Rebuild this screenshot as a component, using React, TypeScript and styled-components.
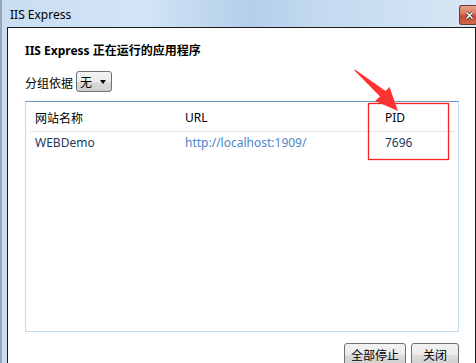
import React from "react";
import styled, { createGlobalStyle } from "styled-components";

const Global = createGlobalStyle`
  html, body { margin: 0; padding: 0; overflow: hidden; background: #fff; }
  body { font-family: "Segoe UI", "Noto Sans", "Noto Sans CJK SC", sans-serif; }
`;

const Window = styled.div`
  position: relative;
  width: 476px;
  height: 363px;
  box-sizing: border-box;
  overflow: hidden;
  border-left: 2px solid #9aa6b2;
  background: linear-gradient(90deg, #c9ddf2 0%, #d3e4f5 30%, #b3cfea 52%, #c4daf0 68%, #d8e7f6 100%);
  display: flex;
  flex-direction: column;
`;

const TitleBar = styled.div`
  height: 27px;
  flex: none;
  display: flex;
  align-items: center;
  justify-content: space-between;
  padding: 1px 0 0 8px;
  box-sizing: border-box;
`;

const Title = styled.span`
  font-size: 12px;
  color: #000;
  font-family: "Segoe UI", "Noto Sans", sans-serif;
`;

const CloseBtn = styled.div`
  width: 18px;
  height: 18px;
  margin-top: 2px;
  margin-right: -2px;
  border: 1px solid #6b3a30;
  border-right: none;
  border-radius: 3px 0 0 3px;
  background: linear-gradient(180deg, #e9a48f 0%, #d9735a 45%, #c24a2c 55%, #d2674c 100%);
  display: flex;
  align-items: center;
  justify-content: center;
`;

const Client = styled.div`
  flex: 1;
  margin-left: 5px;
  width: 469px;
  box-sizing: border-box;
  border: 1px solid #1a1a1a;
  border-bottom: none;
  background: #fff;
  padding: 0 16px 0 17px;
  display: flex;
  flex-direction: column;
`;

const Heading = styled.div`
  margin-top: 15px;
  font-size: 12px;
  line-height: 16px;
  font-weight: bold;
  color: #000;
`;

const GroupRow = styled.div`
  margin-top: 12px;
  height: 21px;
  display: flex;
  align-items: center;
  font-size: 12px;
  color: #000;
`;

const GroupLabel = styled.span`
  margin-top: 3px;
  margin-right: 3px;
`;

const Combo = styled.div`
  width: 36px;
  height: 21px;
  box-sizing: border-box;
  border: 1px solid #707070;
  border-radius: 3px;
  background: linear-gradient(180deg, #f4f4f4 0%, #ebebeb 50%, #dddddd 51%, #cfcfcf 100%);
  display: flex;
  align-items: center;
  justify-content: space-between;
  padding: 0 5px 0 3px;
  font-size: 12px;
`;

const Arrow = styled.span`
  width: 0;
  height: 0;
  border-left: 3.5px solid transparent;
  border-right: 3.5px solid transparent;
  border-top: 4px solid #000;
`;

const ListBox = styled.div`
  margin-top: 9px;
  height: 231px;
  box-sizing: border-box;
  border: 1px solid #c2dbed;
  border-top-color: #6d9ac4;
  padding: 0 3px;
  background: #fff;
`;

const HeaderRow = styled.div`
  display: grid;
  grid-template-columns: 150px 200px 1fr;
  height: 30px;
  align-items: center;
  border-bottom: 1px solid #e5e5e5;
  font-size: 12px;
  color: #000;
  padding-top: 2px;
  box-sizing: border-box;
`;

const DataRow = styled.div`
  display: grid;
  grid-template-columns: 150px 200px 1fr;
  height: 21px;
  align-items: center;
  font-size: 12px;
  color: #1e395b;
`;

const Cell = styled.span<{ $link?: boolean }>`
  padding-left: 6px;
  color: ${(p) => (p.$link ? "#4d86c6" : "inherit")};
`;

const ButtonRow = styled.div`
  margin-top: 11px;
  display: flex;
  justify-content: flex-end;
  gap: 5px;
`;

const Button = styled.div<{ $w: number }>`
  width: ${(p) => p.$w}px;
  height: 23px;
  box-sizing: border-box;
  border: 1px solid #707070;
  border-radius: 3px;
  background: linear-gradient(180deg, #f2f2f2 0%, #ebebeb 50%, #dddddd 51%, #cfcfcf 100%);
  display: flex;
  align-items: center;
  justify-content: center;
  font-size: 12px;
  color: #000;
  padding-top: 1px;
`;

const Overlay = styled.svg`
  position: absolute;
  left: -2px;
  top: 0;
  pointer-events: none;
`;

export default function App() {
  return (
    <>
      <Global />
      <Window>
        <TitleBar>
          <Title>IIS Express</Title>
          <CloseBtn>
            <svg width="9" height="9" viewBox="0 0 9 9">
              <path d="M1.5 1.5 L7.5 7.5 M7.5 1.5 L1.5 7.5" stroke="#3a2a2a" strokeWidth="3" />
              <path d="M1.5 1.5 L7.5 7.5 M7.5 1.5 L1.5 7.5" stroke="#fff" strokeWidth="1.6" />
            </svg>
          </CloseBtn>
        </TitleBar>
        <Client>
          <Heading>IIS Express 正在运行的应用程序</Heading>
          <GroupRow>
            <GroupLabel>分组依据</GroupLabel>
            <Combo>
              <span>无</span>
              <Arrow />
            </Combo>
          </GroupRow>
          <ListBox>
            <HeaderRow>
              <Cell>网站名称</Cell>
              <Cell>URL</Cell>
              <Cell>PID</Cell>
            </HeaderRow>
            <DataRow>
              <Cell>WEBDemo</Cell>
              <Cell $link>http://localhost:1909/</Cell>
              <Cell>7696</Cell>
            </DataRow>
          </ListBox>
          <ButtonRow>
            <Button $w={62}>全部停止</Button>
            <Button $w={48}>关闭</Button>
          </ButtonRow>
        </Client>
        <Overlay width="476" height="363" viewBox="0 0 476 363">
          <rect x="368.5" y="103.5" width="80" height="56" fill="none" stroke="#f22" strokeWidth="1.3" />
          <polygon
            points="355,69.5 385.5,91 389.5,87 398,111 375,101 380,96.5 354.5,70.5"
            fill="#f33"
          />
        </Overlay>
      </Window>
    </>
  );
}
